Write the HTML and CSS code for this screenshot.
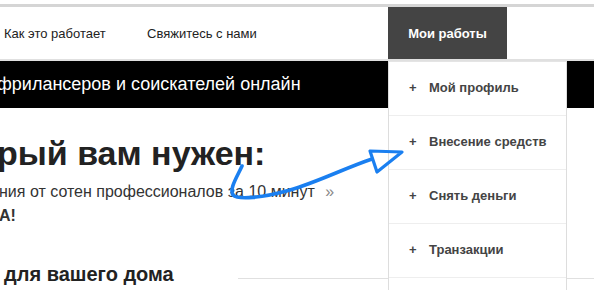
FILE: index.html
```html
<!DOCTYPE html>
<html lang="ru">
<head>
<meta charset="utf-8">
<link rel="stylesheet" href="styles.css">
</head>
<body>
<div class="page">
  <header class="header">
    <nav class="nav">
      <a class="nav-link first">Как это работает</a>
      <a class="nav-link second">Свяжитесь с нами</a>
      <a class="nav-link active">Мои работы</a>
    </nav>
  </header>
  <div class="banner"><span class="banner-text">фрилансеров и соискателей онлайн</span></div>
  <main class="hero">
    <h1 class="hero-title">рый вам нужен:</h1>
    <p class="hero-sub">ния от сотен профессионалов за 10 минут <span class="raquo">»</span></p>
    <p class="hero-strong">А!</p>
    <div class="section-row">
      <h2 class="section-title">для вашего дома</h2>
      <div class="section-rule"></div>
    </div>
  </main>

  <ul class="dropdown">
    <li class="dd-item"><span class="plus">+</span>Мой профиль</li>
    <li class="dd-item"><span class="plus">+</span>Внесение средств</li>
    <li class="dd-item"><span class="plus">+</span>Снять деньги</li>
    <li class="dd-item"><span class="plus">+</span>Транзакции</li>
    <li class="dd-item"></li>
  </ul>

  <svg class="arrow" width="594" height="290" viewBox="0 0 594 290">
    <path d="M242 166 C 237 177, 229 189, 233 195 C 238 200, 262 198, 290 190 C 318 182, 345 168, 372 159" fill="none" stroke="#1a7ff0" stroke-width="3.6" stroke-linecap="round"/>
    <path d="M370 151 L 402 152 L 377 172 Z" fill="none" stroke="#1a7ff0" stroke-width="3.2" stroke-linejoin="round"/>
  </svg>
</div>
</body>
</html>
```

FILE: styles.css
```css
* { box-sizing: border-box; }
html, body { margin: 0; padding: 0; }
body {
  font-family: "Liberation Sans", Arial, sans-serif;
  background: #fff;
  width: 594px;
  height: 290px;
  overflow: hidden;
}
.page { position: relative; width: 594px; height: 290px; overflow: hidden; }

.header {
  margin-top: 4px;
  border-top: 3px solid #d5d5d5;
  border-bottom: 2px solid #e0e0e0;
}
.nav {
  display: flex;
  align-items: stretch;
  height: 52px;
}
.nav-link {
  display: flex;
  align-items: center;
  font-size: 13px;
  color: #222;
  text-decoration: none;
}
.nav-link.first { padding-left: 4px; width: 147px; }
.nav-link.second { width: 237px; }
.nav-link.active {
  background: #444;
  color: #fff;
  font-weight: bold;
  width: 119px;
  justify-content: center;
  margin-left: 4px;
}

.banner {
  background: #000;
  height: 47px;
  display: flex;
  align-items: center;
  overflow: hidden;
}
.banner-text {
  color: #fff;
  font-size: 18px;
  margin-left: -3px;
  white-space: nowrap;
}

.hero { padding-top: 25px; }
.hero-title {
  margin: 0 0 0 -3px;
  font-size: 34px;
  line-height: 40px;
  font-weight: bold;
  color: #222;
  white-space: nowrap;
}
.hero-sub {
  margin: 9px 0 0 -1px;
  font-size: 16px;
  line-height: 20px;
  color: #333;
  white-space: nowrap;
}
.raquo { color: #888; margin-left: 6px; }
.hero-strong {
  margin: 4px 0 0 -1px;
  font-size: 16px;
  line-height: 20px;
  font-weight: bold;
  color: #333;
}
.section-row {
  display: flex;
  align-items: flex-start;
  margin-top: 36px;
}
.section-title {
  margin: 0 0 0 4px;
  font-size: 20px;
  line-height: 24px;
  font-weight: bold;
  color: #222;
  white-space: nowrap;
}
.section-rule {
  flex: 1;
  height: 1px;
  background: #e0e0e0;
  margin-left: 64px;
  margin-top: 16px;
}

.dropdown {
  position: absolute;
  left: 388px;
  top: 61px;
  width: 179px;
  margin: 0;
  padding: 0;
  list-style: none;
  background: #fff;
  border-left: 1px solid #ddd;
  border-right: 1px solid #ddd;
  border-top: 1px solid #e4e4e4;
}
.dd-item {
  height: 54px;
  display: flex;
  align-items: center;
  padding-left: 20px;
  padding-bottom: 2px;
  border-bottom: 1px solid #eee;
  font-size: 13px;
  font-weight: bold;
  color: #444;
}
.plus { width: 20px; font-weight: bold; color: #444; }

.arrow { position: absolute; left: 0; top: 0; pointer-events: none; }
```
